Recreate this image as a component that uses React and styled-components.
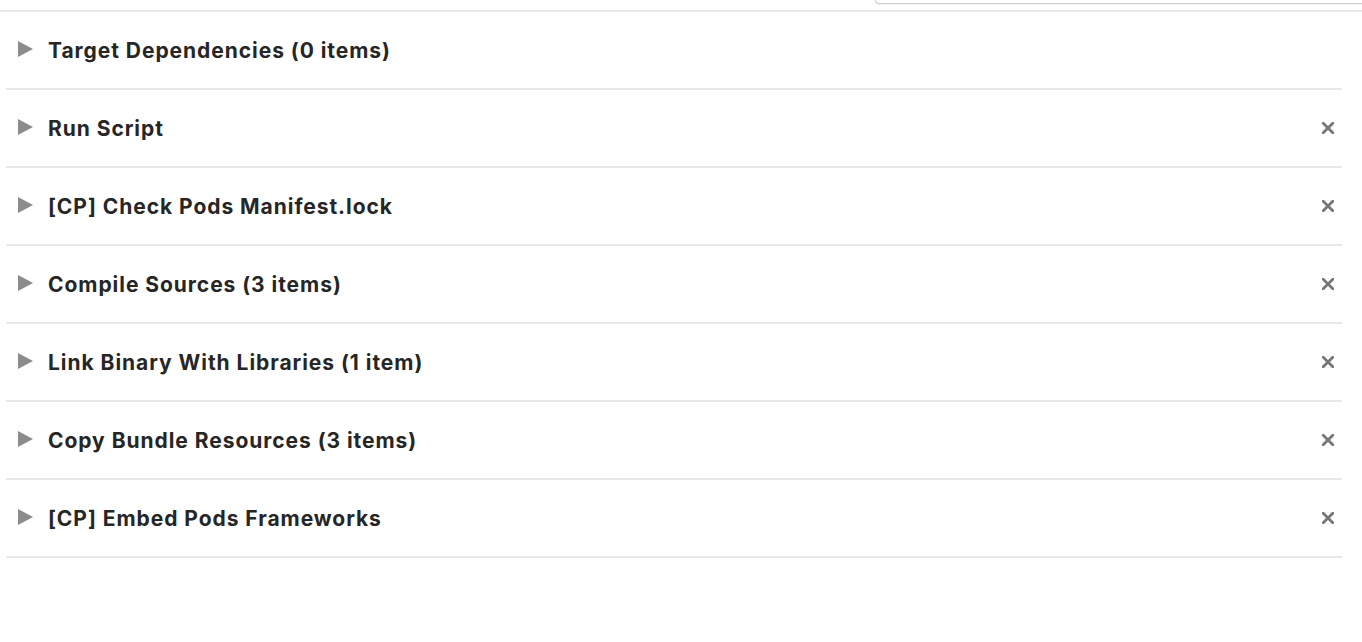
import React from "react";
import styled, { createGlobalStyle } from "styled-components";

const GlobalStyle = createGlobalStyle`
  body {
    margin: 0;
    background: #ffffff;
    font-family: Inter, "Noto Sans", "Liberation Sans", sans-serif;
  }
`;

const phases = [
  { name: "Target Dependencies", count: "(0 items)", removable: false },
  { name: "Run Script", removable: true },
  { name: "[CP] Check Pods Manifest.lock", removable: true },
  { name: "Compile Sources", count: "(3 items)", removable: true },
  { name: "Link Binary With Libraries", count: "(1 item)", removable: true },
  { name: "Copy Bundle Resources", count: "(3 items)", removable: true },
  { name: "[CP] Embed Pods Frameworks", removable: true },
];

export default function App() {
  return (
    <>
      <GlobalStyle />
      <Page>
        <Header>
          <SearchField />
        </Header>
        <List>
          {phases.map((p) => (
            <Row key={p.name}>
              <Disclosure viewBox="0 0 15 16">
                <path d="M0 0 L15 8 L0 16 Z" fill="#8c8c8c" />
              </Disclosure>
              <Title>
                {p.name}
                {p.count && " " + p.count}
              </Title>
              {p.removable && (
                <Remove viewBox="0 0 12 12">
                  <path
                    d="M1.2 1.2 L10.8 10.8 M10.8 1.2 L1.2 10.8"
                    stroke="#767676"
                    strokeWidth="2.8"
                    strokeLinecap="square"
                  />
                </Remove>
              )}
            </Row>
          ))}
        </List>
      </Page>
    </>
  );
}

const Page = styled.div`
  width: 1362px;
  height: 642px;
  overflow: hidden;
`;

const Header = styled.div`
  height: 10px;
  display: flex;
  justify-content: flex-end;
  border-bottom: 2px solid #e8e8e8;
`;

const SearchField = styled.div`
  width: 486px;
  height: 3px;
  border: 1px solid #cfcfcf;
  border-top: none;
  border-right: none;
  border-radius: 0 0 0 6px;
  box-shadow: 0 1px 1px rgba(0, 0, 0, 0.06);
`;

const List = styled.div`
  margin-left: 6px;
  width: 1336px;
`;

const Row = styled.div`
  height: 76px;
  display: flex;
  align-items: center;
  padding: 0 8px 0 12px;
  border-bottom: 2px solid #e8e8e8;
`;

const Disclosure = styled.svg`
  width: 15px;
  height: 16px;
  flex: none;
  margin-right: 15px;
  margin-top: -2px;
`;

const Title = styled.div`
  flex: 1;
  font-size: 21px;
  font-weight: 700;
  color: #262626;
  letter-spacing: 0.95px;
`;

const Remove = styled.svg`
  width: 12px;
  height: 12px;
  flex: none;
`;
